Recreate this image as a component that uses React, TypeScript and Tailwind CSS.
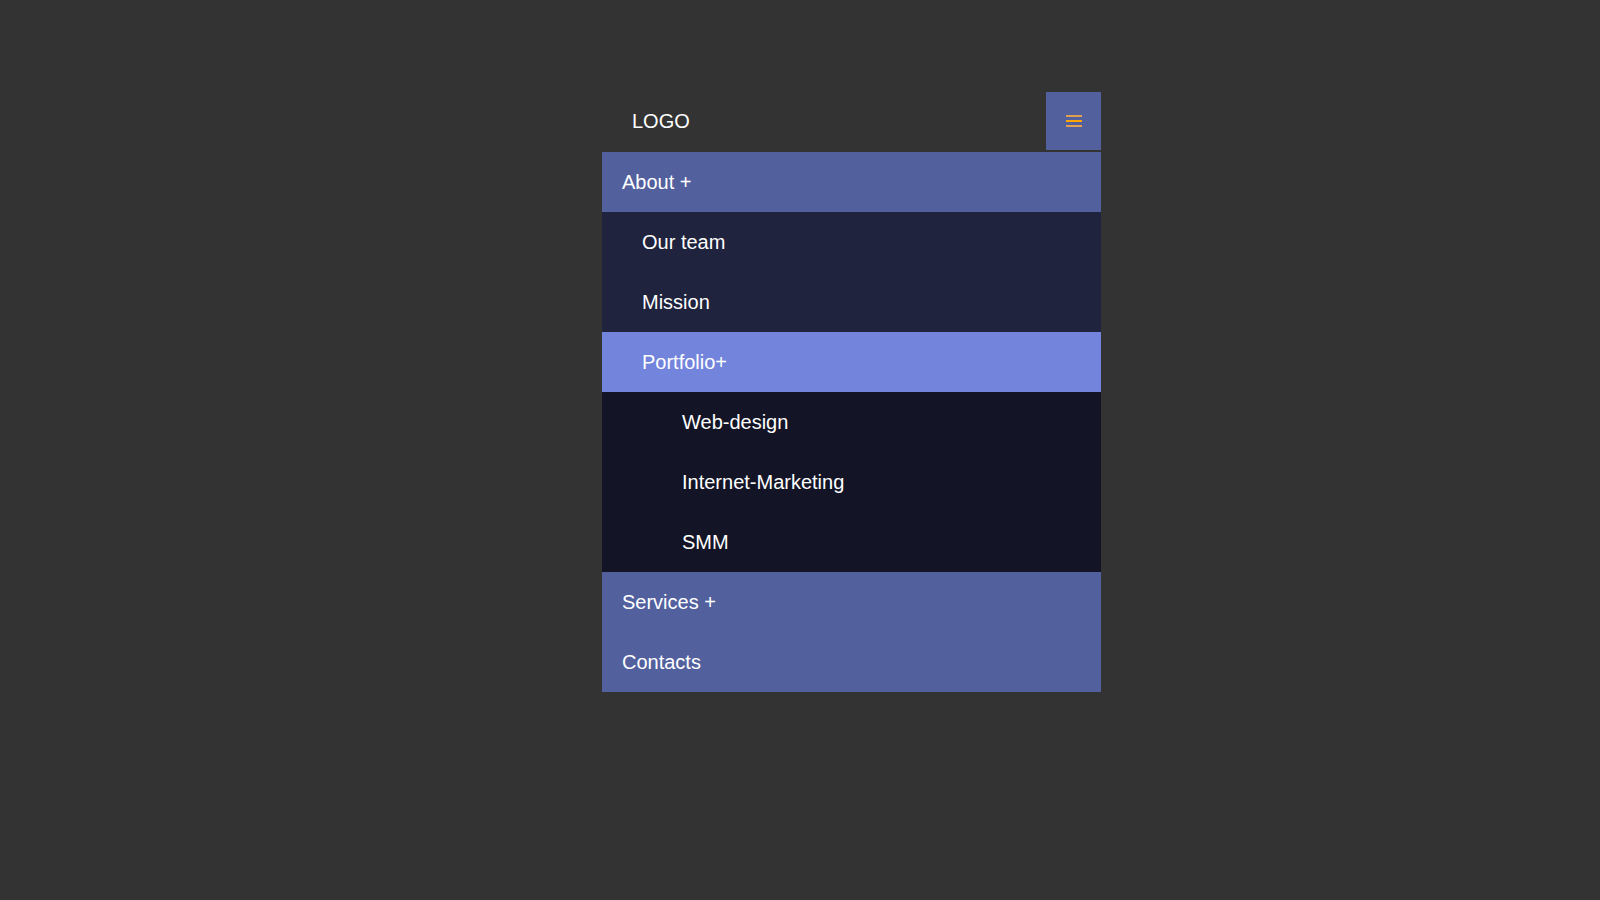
const rows = [
  { label: 'About +', pad: 'pl-[20px]', bg: 'bg-[#52609e]' },
  { label: 'Our team', pad: 'pl-[40px]', bg: 'bg-[#1f233d]' },
  { label: 'Mission', pad: 'pl-[40px]', bg: 'bg-[#1f233d]' },
  { label: 'Portfolio+', pad: 'pl-[40px]', bg: 'bg-[#7284db]' },
  { label: 'Web-design', pad: 'pl-[80px]', bg: 'bg-[#131526]' },
  { label: 'Internet-Marketing', pad: 'pl-[80px]', bg: 'bg-[#131526]' },
  { label: 'SMM', pad: 'pl-[80px]', bg: 'bg-[#131526]' },
  { label: 'Services +', pad: 'pl-[20px]', bg: 'bg-[#52609e]' },
  { label: 'Contacts', pad: 'pl-[20px]', bg: 'bg-[#52609e]' },
]

export default function App() {
  return (
    <div className="min-h-screen bg-[#333333] pt-[92px] font-['Liberation_Sans',Arial,sans-serif] text-white">
      <div className="ml-[602px] w-[499px]">
        {/* header */}
        <header className="flex h-[58px] items-center justify-between">
          <span className="pl-[30px] text-[20px]">LOGO</span>
          <button className="flex h-[58px] w-[55px] flex-col items-center justify-center gap-[3px] bg-[#52609e]">
            <span className="h-[2px] w-[16px] bg-[#e0a050]" />
            <span className="h-[2px] w-[16px] bg-[#ffa500]" />
            <span className="h-[2px] w-[16px] bg-[#e0a050]" />
          </button>
        </header>

        {/* menu */}
        <nav className="mt-[2px] flex flex-col">
          {rows.map(r => (
            <a
              key={r.label}
              className={`flex h-[60px] items-center text-[20px] ${r.pad} ${r.bg}`}
            >
              {r.label}
            </a>
          ))}
        </nav>
      </div>
    </div>
  )
}
